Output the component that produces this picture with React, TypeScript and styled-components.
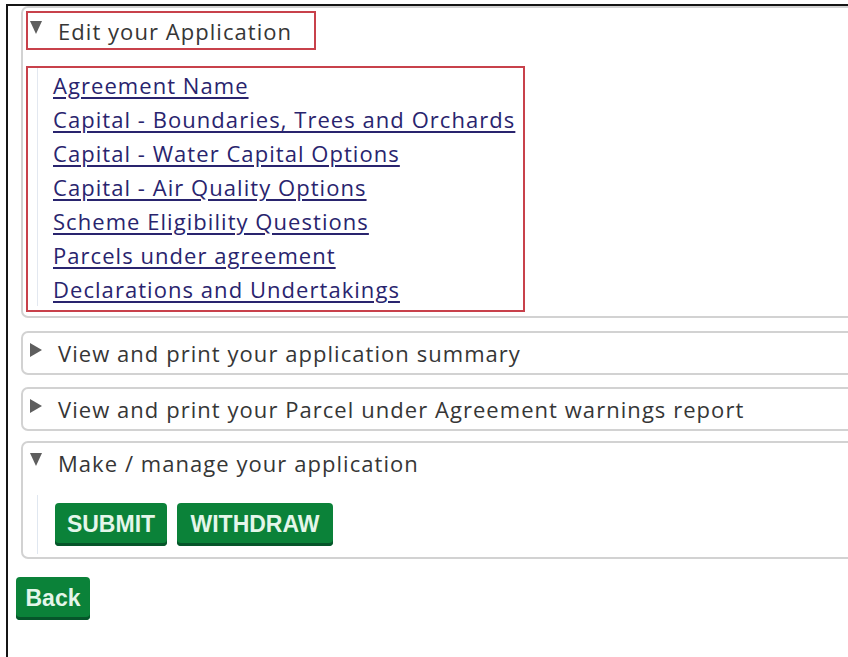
import React from "react";
import styled, { createGlobalStyle } from "styled-components";

const GlobalStyle = createGlobalStyle`
  html, body {
    margin: 0;
    padding: 0;
    background: #ffffff;
    overflow: hidden;
  }
  body {
    font-family: "Open Sans", "DejaVu Sans", sans-serif;
  }
`;

const Frame = styled.div`
  margin: 4px 0 0 6px;
  width: 900px;
  height: 660px;
  border-top: 2px solid #151515;
  border-left: 2px solid #151515;
  padding: 0 0 0 8px;
  box-sizing: border-box;
`;

const Panel = styled.section<{ gap: number }>`
  margin: ${({ gap }) => gap}px 0 0 5px;
  border: 2px solid #d2d2d2;
  border-radius: 7px;
  background: #ffffff;
  padding: 3px 0 3px 3px;
  box-sizing: border-box;
`;

const Header = styled.div<{ marked?: boolean }>`
  display: flex;
  align-items: center;
  width: ${({ marked }) => (marked ? "290px" : "auto")};
  height: ${({ marked }) => (marked ? "39px" : "34px")};
  box-sizing: border-box;
  border: 2px solid ${({ marked }) => (marked ? "#c8414b" : "transparent")};
  padding-left: 2px;
  color: #363636;
  font-size: 22px;
  letter-spacing: 1.05px;
  white-space: nowrap;
  cursor: pointer;
`;

const Arrow = styled.span<{ open: boolean }>`
  display: inline-block;
  flex: none;
  width: 0;
  height: 0;
  ${({ open }) =>
    open
      ? `border-left: 6px solid transparent;
         border-right: 6px solid transparent;
         border-top: 13px solid #5e5e5e;
         margin: -7px 16px 0 0;`
      : `border-top: 7.5px solid transparent;
         border-bottom: 7.5px solid transparent;
         border-left: 12px solid #5e5e5e;
         margin: -6px 16px 0 0;`}
`;

const LinkBox = styled.div`
  margin: 16px 0 1px;
  width: 499px;
  box-sizing: border-box;
  border: 2px solid #c8414b;
  padding: 0 0 4px 9px;
`;

const LinkList = styled.ul`
  list-style: none;
  margin: 0;
  padding: 0 0 0 15px;
  border-left: 1px solid #e3e8f0;
`;

const LinkItem = styled.li`
  line-height: 34px;
  font-size: 22px;
  letter-spacing: 1.05px;
  white-space: nowrap;
`;

const NavLink = styled.a`
  color: #29246e;
  text-decoration: underline;
  text-underline-offset: 3px;
`;

const Actions = styled.div`
  display: flex;
  gap: 10px;
  margin: 15px 0 0 11px;
  padding: 8px 0 8px 17px;
  border-left: 1px solid #e0e7f0;
`;

const GreenButton = styled.button<{ w: number }>`
  width: ${({ w }) => w}px;
  height: 43px;
  padding: 0;
  border: none;
  border-radius: 4px;
  background: #0b8239;
  box-shadow: inset 0 -3px 0 #06552a;
  color: #e4f6ea;
  font-family: "Liberation Sans", Arial, sans-serif;
  font-weight: bold;
  font-size: 23px;
  letter-spacing: 0;
  cursor: pointer;
`;

const BackRow = styled.div`
  margin-top: 18px;
  display: flex;
`;

const links = [
  "Agreement Name",
  "Capital - Boundaries, Trees and Orchards",
  "Capital - Water Capital Options",
  "Capital - Air Quality Options",
  "Scheme Eligibility Questions",
  "Parcels under agreement",
  "Declarations and Undertakings",
];

export default function App() {
  return (
    <>
      <GlobalStyle />
      <Frame>
        <Panel gap={0}>
          <Header marked>
            <Arrow open />
            Edit your Application
          </Header>
          <LinkBox>
            <LinkList>
              {links.map((l) => (
                <LinkItem key={l}>
                  <NavLink href="#">{l}</NavLink>
                </LinkItem>
              ))}
            </LinkList>
          </LinkBox>
        </Panel>

        <Panel gap={13}>
          <Header>
            <Arrow open={false} />
            View and print your application summary
          </Header>
        </Panel>

        <Panel gap={12}>
          <Header>
            <Arrow open={false} />
            View and print your Parcel under Agreement warnings report
          </Header>
        </Panel>

        <Panel gap={10}>
          <Header>
            <Arrow open />
            Make / manage your application
          </Header>
          <Actions>
            <GreenButton w={112}>SUBMIT</GreenButton>
            <GreenButton w={156}>WITHDRAW</GreenButton>
          </Actions>
        </Panel>

        <BackRow>
          <GreenButton w={74}>Back</GreenButton>
        </BackRow>
      </Frame>
    </>
  );
}
